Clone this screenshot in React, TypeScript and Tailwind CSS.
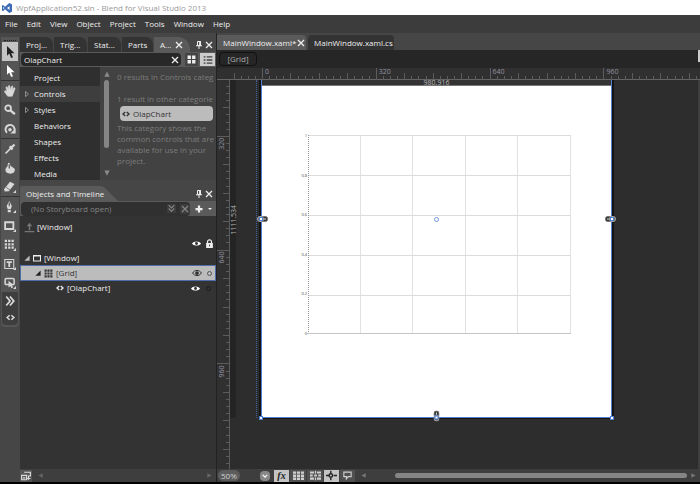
import React, { useState } from "react";
import clsx from "clsx";

const MENU = ["File", "Edit", "View", "Object", "Project", "Tools", "Window", "Help"];

const PANEL_TABS = [
  { label: "Proj...", width: "w-[34px]" },
  { label: "Trig...", width: "w-[34px]" },
  { label: "Stat...", width: "w-[34px]" },
  { label: "Parts", width: "w-[32px]" },
];

const CATEGORIES = [
  { label: "Project" },
  { label: "Controls", expandable: true, active: true },
  { label: "Styles", expandable: true },
  { label: "Behaviors" },
  { label: "Shapes" },
  { label: "Effects" },
  { label: "Media" },
];

const Svg = ({ size = 10, children }: { size?: number; children: React.ReactNode }) => (
  <svg
    width={size}
    height={size}
    viewBox="0 0 16 16"
    fill="none"
    stroke="currentColor"
    strokeWidth="1.6"
    className="shrink-0"
    aria-hidden
  >
    {children}
  </svg>
);

const CloseIcon = () => (
  <Svg size={8}>
    <path d="M2 2 14 14M14 2 2 14" strokeWidth="2.6" />
  </Svg>
);

const PinIcon = () => (
  <Svg size={8}>
    <path d="M5 1h6v8H5zM2 9.500h12M8 10v6" strokeWidth="2" />
    <path d="M9 1h2v8H9z" fill="currentColor" />
  </Svg>
);

const EyeIcon = () => (
  <Svg size={9}>
    <path d="M0 8C3 3 13 3 16 8 13 13 3 13 0 8z" fill="#fff" stroke="none" />
    <circle cx="8" cy="8" r="2.600" fill="#333" stroke="none" />
  </Svg>
);

const EyeOutlineIcon = () => (
  <Svg size={10}>
    <path d="M1 8C4 2.500 12 2.500 15 8 12 13.500 4 13.500 1 8z" strokeWidth="1.600" />
    <circle cx="8" cy="8" r="3" fill="currentColor" stroke="none" />
  </Svg>
);

const LockIcon = () => (
  <Svg size={9}>
    <path d="M2 7h12v9H2z" fill="currentColor" stroke="none" />
    <path d="M4.500 8V5a3.500 3.500 0 0 1 7 0v3" strokeWidth="2" />
    <path d="M8 10v3" stroke="#333" />
  </Svg>
);

const TagIcon = ({ size = 8 }: { size?: number }) => (
  <Svg size={size}>
    <path d="M6.500 4 2 8l4.500 4M9.500 4 14 8l-4.500 4" strokeWidth="2.800" />
  </Svg>
);

const GridIcon = () => (
  <Svg size={9}>
    <path
      d="M1 1h3.800v3.800H1zM6.100 1h3.800v3.800H6.100zM11.200 1H15v3.800h-3.800zM1 6.100h3.800v3.800H1zM6.100 6.100h3.800v3.800H6.100zM11.200 6.100H15v3.800h-3.800zM1 11.200h3.800V15H1zM6.100 11.200h3.800V15H6.100zM11.200 11.200H15V15h-3.800z"
      fill="currentColor"
      stroke="none"
    />
  </Svg>
);

const Corner = () => <path d="M16 12v4h-4z" fill="currentColor" stroke="none" />;

const TOOLS: { name: string; icon: React.ReactNode; divider?: boolean }[] = [
  {
    name: "Selection",
    icon: (
      <Svg size={12}>
        <path d="M4 0v13l3-3 2.500 6 2.500-1-2.500-5.500H14z" fill="currentColor" stroke="none" />
      </Svg>
    ),
  },
  {
    name: "Direct Selection",
    divider: true,
    icon: (
      <Svg size={12}>
        <path d="M4 0v13l3-3 2.500 6 2.500-1-2.500-5.500H14z" fill="#fff" stroke="none" />
      </Svg>
    ),
  },
  {
    name: "Pan",
    icon: (
      <Svg size={12}>
        <path
          d="M5 15 1 9.500C0 8 1.500 7 2.800 8L4 9.200 2.600 3.500c0-1.300 1.400-1.500 1.900-.4L6 6.800 5.700 1.600C5.900.4 7.500.4 7.800 1.600l.7 5L10 1.900c.5-1.100 2-.8 1.900.5L11 7.200l2-3.200c.8-.9 2-.2 1.700.8L12.500 11 11 15z"
          fill="currentColor"
          stroke="currentColor"
          strokeWidth=".8"
        />
      </Svg>
    ),
  },
  {
    name: "Zoom",
    icon: (
      <Svg size={12}>
        <circle cx="5.500" cy="5.500" r="3.800" strokeWidth="2.400" />
        <path d="m8.500 8.500 6 5" strokeWidth="3.200" />
      </Svg>
    ),
  },
  {
    name: "Camera Orbit",
    divider: true,
    icon: (
      <Svg size={12}>
        <path d="M4 13A6 6 0 1 1 14 9" strokeWidth="2.600" />
        <circle cx="8" cy="9" r="2.400" fill="currentColor" stroke="none" />
        <path d="M15.500 7v7H8.500z" fill="currentColor" stroke="none" />
      </Svg>
    ),
  },
  {
    name: "Eyedropper",
    icon: (
      <Svg size={12}>
        <path d="M2 14 9.500 6.500" strokeWidth="2.200" />
        <path d="m7.500 4.500 4 4M10 6l4-4" strokeWidth="3" />
      </Svg>
    ),
  },
  {
    name: "Paint Bucket",
    icon: (
      <Svg size={12}>
        <path
          d="M5.500 1c2.500 0 3 2 3 4L13 8c2 1 2 4 0 6-2 2-7 2-9.500 0C1 12 1.500 8 4.500 6z"
          fill="currentColor"
          stroke="none"
        />
        <path d="M7 3v5.500" stroke="#555" />
      </Svg>
    ),
  },
  {
    name: "Eraser",
    divider: true,
    icon: (
      <Svg size={12}>
        <path d="M0 11 8 1l6 3-7.500 9.500L1 14z" fill="currentColor" stroke="none" />
        <path d="m3 8.500 5 3.500" stroke="#555" strokeWidth="1" />
        <Corner />
      </Svg>
    ),
  },
  {
    name: "Pen",
    icon: (
      <Svg size={12}>
        <path d="M7 0 3.500 6.500 5 11h4l1.500-4.500zM5 12h4v3H5z" fill="currentColor" stroke="none" />
        <path d="M7 2v5" stroke="#555" />
        <Corner />
      </Svg>
    ),
  },
  {
    name: "Rectangle",
    icon: (
      <Svg size={12}>
        <path d="M1.500 3h11v9h-11z" strokeWidth="2.400" />
        <Corner />
      </Svg>
    ),
  },
  {
    name: "Grid",
    icon: (
      <Svg size={12}>
        <path
          d="M1 1h3v3H1zM5.500 1h3v3h-3zM10 1h3v3h-3zM1 5.500h3v3H1zM5.500 5.500h3v3h-3zM10 5.500h3v3h-3zM1 10h3v3H1zM5.500 10h3v3h-3zM10 10h3v3h-3z"
          fill="currentColor"
          stroke="none"
        />
        <Corner />
      </Svg>
    ),
  },
  {
    name: "TextBlock",
    icon: (
      <Svg size={12}>
        <path d="M1 2h12v12H1z" strokeWidth="1.400" />
        <path d="M3.500 5.500h7M7 5.500v6.500" strokeWidth="2.400" />
        <Corner />
      </Svg>
    ),
  },
  {
    name: "Button",
    icon: (
      <Svg size={12}>
        <rect x="1.500" y="2" width="12" height="8" rx="1.500" strokeWidth="2" />
        <path d="M6 5v9l2.300-2 1.700 3 2-1-1.500-3H13z" fill="currentColor" stroke="none" />
        <Corner />
      </Svg>
    ),
  },
];

const ToolBar = () => {
  const [tool, setTool] = useState("Selection");

  return (
    <nav className="flex w-5 shrink-0 flex-col bg-[#464646] pl-px pt-1">
      <div className="flex w-[18px] flex-col items-center rounded-b-sm bg-[#555] text-[#d8d8d8]">
        <span className="my-px h-[3px] w-3 border-b border-dotted border-[#222]" />
        {TOOLS.map((t) => (
          <React.Fragment key={t.name}>
            <button
              aria-label={t.name}
              onClick={() => setTool(t.name)}
              className={clsx(
                "flex h-[19px] w-4 items-center justify-center",
                tool === t.name && "bg-[#c4c4c4] text-[#222]",
              )}
            >
              {t.icon}
            </button>
            {t.divider && <span className="h-px w-full bg-[#333]" />}
          </React.Fragment>
        ))}
        <div className="mb-[2px] flex w-4 flex-col items-center rounded-b-sm bg-[#3e3e3e]">
          <button aria-label="Assets" className="flex h-[17px] w-4 items-center justify-center">
            <Svg size={12}>
              <path d="m3 2 5 6-5 6M8 2l5 6-5 6" strokeWidth="2.400" />
            </Svg>
          </button>
          <button
            aria-label="Last used asset"
            className="flex h-4 w-4 items-center justify-center"
          >
            <TagIcon size={9} />
          </button>
        </div>
      </div>
    </nav>
  );
};

const AssetsPanel = () => {
  const [query, setQuery] = useState("OlapChart");

  return (
    <section className="flex h-[145px] shrink-0 flex-col">
      <div className="flex h-[17px] items-end pt-[2px] leading-none">
        {PANEL_TABS.map((tab) => (
          <button
            key={tab.label}
            className={clsx(
              "h-[15px] shrink-0 rounded-tr-lg border-r border-[#464646] bg-[#333] pl-[6px] text-left",
              tab.width,
            )}
          >
            {tab.label}
          </button>
        ))}
        <div className="flex h-[15px] w-[36px] items-center gap-1 rounded-tr-xl bg-[#5a5a5a] pl-[6px]">
          <button>A...</button>
          <button aria-label="Close Assets">
            <CloseIcon />
          </button>
        </div>
        <div className="ml-auto flex h-[15px] items-center gap-[2px] pr-[3px]">
          <button aria-label="Pin">
            <PinIcon />
          </button>
          <button aria-label="Close panel">
            <CloseIcon />
          </button>
        </div>
      </div>
      <div className="flex h-[15px] shrink-0 items-center gap-1 bg-[#5a5a5a] pl-px pr-px">
        <label className="flex h-[13px] min-w-0 flex-1 items-center rounded-sm bg-[#282828] pl-[3px] pr-[2px]">
          <input
            aria-label="Search assets"
            value={query}
            onChange={(e) => setQuery(e.target.value)}
            className="h-[13px] min-w-0 flex-1 bg-transparent outline-none"
          />
          <button aria-label="Clear search" onClick={() => setQuery("")}>
            <CloseIcon />
          </button>
        </label>
        <button
          aria-label="Grid mode"
          className="flex h-[13px] w-[13px] items-center justify-center bg-[#444]"
        >
          <Svg size={9}>
            <path
              d="M1 1h6v6H1zM9 1h6v6H9zM1 9h6v6H1zM9 9h6v6H9z"
              fill="currentColor"
              stroke="none"
            />
          </Svg>
        </button>
        <button
          aria-label="List mode"
          className="-ml-[2px] flex h-[13px] w-[15px] items-center justify-center bg-[#cdcdcd] text-[#444]"
        >
          <Svg size={10}>
            <path d="M1 3h3M6 3h9M1 8h3M6 8h9M1 13h3M6 13h9" strokeWidth="2.200" />
          </Svg>
        </button>
      </div>
      <div className="flex min-h-0 flex-1">
        <ul className="w-20 shrink-0 bg-[#2f2f2f] pt-[3px]">
          {CATEGORIES.map((c) => (
            <li
              key={c.label}
              className={clsx("flex h-4 items-center pl-1", c.active && "bg-[#3e3e3e]")}
            >
              <span className="w-[10px] text-[#aaa]">
                {c.expandable && (
                  <Svg size={6}>
                    <path d="M4 1v14l8-7z" strokeWidth="2" />
                  </Svg>
                )}
              </span>
              {c.label}
            </li>
          ))}
        </ul>
        <div className="flex w-[13px] shrink-0 flex-col items-center bg-[#424242] py-1 text-[#8a8a8a]">
          <Svg size={6}>
            <path d="M8 1 15 15H1z" fill="currentColor" stroke="none" />
          </Svg>
          <span className="mt-[3px] h-[68px] w-[5px] rounded-full bg-[#858585]" />
          <span className="mt-auto">
            <Svg size={6}>
              <path d="M8 15 15 1H1z" fill="currentColor" stroke="none" />
            </Svg>
          </span>
        </div>
        <div className="min-w-0 flex-1 whitespace-nowrap bg-[#424242] pl-1 pt-1 leading-[11px] text-[#7c7c7c]">
          <p>0 results in Controls categ</p>
          <p className="mt-[11px]">1 result in other categorie</p>
          <button className="ml-[3px] mt-[2px] flex h-[15px] w-[93px] items-center gap-[3px] rounded-sm bg-[#bcbcbc] pl-[2px] text-[#333]">
            <TagIcon />
            OlapChart
          </button>
          <p className="mt-px">
            This category shows the
            <br />
            common controls that are
            <br />
            available for use in your
            <br />
            project.
          </p>
        </div>
      </div>
    </section>
  );
};

const ObjectsPanel = () => (
  <section className="flex min-h-0 flex-1 flex-col bg-[#464646] pt-[6px]">
    <div className="flex h-[15px] shrink-0 items-center">
      <h2 className="relative flex h-full w-[98px] items-center pl-[6px]">
        <svg
          className="absolute inset-0 h-full w-full"
          viewBox="0 0 98 15"
          preserveAspectRatio="none"
          aria-hidden
        >
          <path d="M0 15V2Q0 0 2 0H80Q84 0 87 4L98 15z" fill="#5a5a5a" />
        </svg>
        <span className="relative whitespace-nowrap">Objects and Timeline</span>
      </h2>
      <div className="ml-auto flex items-center gap-[2px] pr-[3px]">
        <button aria-label="Pin">
          <PinIcon />
        </button>
        <button aria-label="Close panel">
          <CloseIcon />
        </button>
      </div>
    </div>
    <div className="flex h-[15px] shrink-0 items-center bg-[#5a5a5a]">
      <div className="ml-px flex h-[14px] min-w-0 flex-1 items-center gap-1 rounded-sm bg-[#303030] pl-[10px] text-[#858585]">
        <span className="flex-1">(No Storyboard open)</span>
        <button aria-label="Open storyboard" className="bg-[#3c3c3c]">
          <Svg size={9}>
            <path d="m3 2 5 5 5-5M3 8l5 5 5-5" strokeWidth="2" />
          </Svg>
        </button>
        <button aria-label="Close storyboard" className="bg-[#3c3c3c] p-px">
          <CloseIcon />
        </button>
      </div>
      <button
        aria-label="New storyboard"
        className="flex w-[26px] items-center justify-center gap-[5px]"
      >
        <Svg size={8}>
          <path d="M8 1v14M1 8h14" strokeWidth="4.500" />
        </Svg>
        <Svg size={4}>
          <path d="M0 4h16l-8 8z" fill="currentColor" stroke="none" />
        </Svg>
      </button>
    </div>
    <div className="flex min-h-0 flex-1 flex-col bg-[#333] pt-[3px]">
      <div className="flex h-4 items-center gap-[2px] pl-1">
        <span className="text-[#777]">
          <Svg size={11}>
            <path d="M8 12V4M1 14h14" strokeWidth="2" />
            <path d="M8 1 4 6h8z" fill="currentColor" stroke="none" />
          </Svg>
        </span>
        [Window]
      </div>
      <div className="flex h-4 items-center justify-end gap-1 pr-[2px]">
        <EyeIcon />
        <LockIcon />
      </div>
      <ul>
        <li className="flex h-[14px] items-center pl-1">
          <Svg size={6}>
            <path d="M15 1v14H1z" fill="#bbb" stroke="none" />
          </Svg>
          <span className="ml-[3px] mr-[3px]">
            <Svg size={8}>
              <path d="M1 3h14v11H1zM1 4h14" strokeWidth="2.200" />
            </Svg>
          </span>
          [Window]
        </li>
        <li className="flex h-4 items-center border border-[#4f6da8] bg-[#bcbcbc] pl-[14px] pr-[2px] text-[#333]">
          <Svg size={6}>
            <path d="M15 1v14H1z" fill="#222" stroke="none" />
          </Svg>
          <span className="ml-[3px] mr-[3px]">
            <GridIcon />
          </span>
          <span className="flex-1">[Grid]</span>
          <EyeOutlineIcon />
          <span className="ml-[5px] mr-px h-[5px] w-[5px] rounded-full border border-[#555]" />
        </li>
        <li className="flex h-[14px] items-center pl-9 pr-1">
          <TagIcon />
          <span className="ml-[3px] flex-1">[OlapChart]</span>
          <EyeIcon />
          <span className="ml-[6px] mr-px h-[5px] w-[5px] rounded-full border border-[#1c1c1c]" />
        </li>
      </ul>
    </div>
    <div className="flex h-[13px] shrink-0 items-center justify-between bg-[#3e3e3e] pr-1 text-[#666]">
      <div className="flex items-center gap-[6px]">
        <button aria-label="Zoom timeline" className="bg-[#555] p-px text-[#ddd]">
          <Svg size={10}>
            <path d="M5 2h10v6h-4M1 7h8v7H1zM3 11h4M12 8v6M9 12h6" strokeWidth="1.800" />
          </Svg>
        </button>
        <Svg size={5}>
          <path d="M15 1v14L1 8z" fill="currentColor" stroke="none" />
        </Svg>
      </div>
      <Svg size={5}>
        <path d="M1 1v14l14-7z" fill="currentColor" stroke="none" />
      </Svg>
    </div>
  </section>
);

// 320 document units take this many pixels at 50% zoom
const STEP = 113.8;
const ticks = Array.from({ length: 70 }, (_, i) => i - 4);

const tickLength = (i: number) => (i % 16 === 0 ? 12 : i % 4 === 0 ? 6 : 3);

const TopRuler = () => (
  <svg className="h-3 w-full shrink-0 bg-[#303030]" aria-hidden>
    <path d="M0 11.500H2000" stroke="#666" />
    {ticks.map((i) => {
      const x = Math.round(45 + (i * STEP) / 16) + 0.5;
      return x > 14 ? <path key={i} d={`M${x} 12V${11 - tickLength(i)}`} stroke="#5c5c5c" /> : null;
    })}
    {[0, 1, 2, 3].map((n) => (
      <text key={n} x={48 + n * STEP} y="6" fontSize="7" fill="#9090a0">
        {n * 320}
      </text>
    ))}
  </svg>
);

const LeftRuler = () => (
  <svg className="h-full w-[13px] shrink-0 bg-[#303030]" aria-hidden>
    <path d="M12.500 0V2000" stroke="#5c5c5c" />
    {ticks.map((i) => {
      const y = Math.round(-58 + (i * STEP) / 16) + 0.5;
      return y > 2 ? <path key={i} d={`M12 ${y}H${12 - tickLength(i)}`} stroke="#5c5c5c" /> : null;
    })}
    {[1, 2, 3].map((n) => (
      <text
        key={n}
        transform={`translate(7 ${-44 + n * STEP}) rotate(-90)`}
        fontSize="7"
        fill="#9090a0"
      >
        {n * 320}
      </text>
    ))}
  </svg>
);

const OlapChart = () => (
  <svg width="276" height="208" viewBox="0 0 276 208" aria-label="OlapChart">
    {[62.5, 114.5, 167.5, 219.5, 272.5].map((x) => (
      <path key={x} d={`M${x} 4V202`} stroke="#e2e2e2" />
    ))}
    {[4.5, 44.5, 84.5, 124.5, 164.5].map((y) => (
      <path key={y} d={`M10 ${y}H273`} stroke="#dcdcdc" />
    ))}
    <path d="M10.500 4V202" stroke="#999" strokeDasharray="1 1" />
    <path d="M9 202.500H273" stroke="#c4c4c4" />
    {["1", "0.8", "0.6", "0.4", "0.2", "0"].map((label, i) => (
      <text key={label} x="9" y={6 + i * 39.6} fontSize="4" fill="#444" textAnchor="end">
        {label}
      </text>
    ))}
  </svg>
);

const Handle = ({ className }: { className: string }) => (
  <span className={clsx("absolute h-1 w-1 border border-[#4f7fd0] bg-white", className)} />
);

const LinkHandle = ({ className }: { className: string }) => (
  <svg width="11" height="6" viewBox="0 0 11 6" className={clsx("absolute", className)} aria-hidden>
    <rect x="4" y=".5" width="6.500" height="5" rx="2" fill="#333" stroke="#777" />
    <rect x=".5" y=".5" width="6" height="5" rx="2.500" fill="#666" stroke="#aaa" />
    <rect x="2.500" y="1.500" width="3" height="3" fill="#fff" stroke="#4f7fd0" />
    <path d="M7 3h2" stroke="#ddd" />
  </svg>
);

const Artboard = () => (
  <div className="relative flex min-h-0 flex-1 items-start bg-[#2d2d2d]">
    <div className="h-[338px] w-[6px] bg-[#242424]" />
    <div className="ml-5 h-[338px] w-[3px] border-l border-dotted border-[#3f5f9f]" />
    <div className="relative h-[339px] w-[355px] border-b border-l-2 border-r-2 border-[#141414]">
      <div className="flex h-full flex-col border-x border-b border-[#4f7fd0] bg-white">
        <div className="flex h-[6px] items-center justify-center border-b border-[#777] bg-[#333] text-[7px] leading-none text-[#bbb]">
          980.916
        </div>
        <div className="pl-9 pt-[45px]">
          <OlapChart />
        </div>
      </div>
      <span className="absolute left-[173px] top-[137px] h-[5px] w-[5px] rounded-full border border-[#6f9be0] bg-white" />
      <LinkHandle className="-left-1 top-[136px]" />
      <LinkHandle className="-right-1 top-[136px] rotate-180" />
      <LinkHandle className="-bottom-px left-[170px] -rotate-90" />
      <Handle className="-bottom-[2px] -left-[2px]" />
      <Handle className="-bottom-[2px] -right-[2px]" />
    </div>
    <span className="absolute left-0 top-[125px] rotate-180 text-[7px] leading-[7px] text-[#b0b0b0] [writing-mode:vertical-rl]">
      1111.534
    </span>
  </div>
);

const StatusBar = () => (
  <div className="flex h-[13px] shrink-0 items-center bg-[#3e3e3e] pl-px text-[#cfcfcf]">
    <input
      aria-label="Zoom"
      defaultValue="50%"
      className="h-[11px] w-[22px] rounded-full bg-[#5c5c5c] pl-[3px] outline-none"
    />
    <button
      aria-label="Zoom levels"
      className="ml-5 flex h-[10px] w-[10px] items-center justify-center rounded-sm bg-[#888] text-white"
    >
      <Svg size={6}>
        <path d="m2 5 6 6 6-6" strokeWidth="3" />
      </Svg>
    </button>
    <div className="ml-1 flex items-center gap-px">
      <button
        aria-label="Effects rendering"
        className="flex h-3 w-[15px] items-center justify-center bg-[#c4c4c4] font-['Liberation_Serif',serif] text-[10px] font-bold italic leading-none text-[#222]"
      >
        fx
      </button>
      <button
        aria-label="Show snap grid"
        className="flex h-3 w-4 items-center justify-center bg-[#505050]"
      >
        <Svg size={11}>
          <path
            d="M0 2h4.500v3.500H0zM5.700 2h4.500v3.500H5.700zM11.500 2H16v3.500h-4.500zM0 6.500h4.500V10H0zM5.700 6.500h4.500V10H5.700zM11.500 6.500H16V10h-4.500zM0 11h4.500v3.500H0zM5.700 11h4.500v3.500H5.700zM11.500 11H16v3.500h-4.500z"
            fill="currentColor"
            stroke="none"
          />
        </Svg>
      </button>
      <button
        aria-label="Snap to gridlines"
        className="flex h-3 w-4 items-center justify-center bg-[#505050]"
      >
        <Svg size={11}>
          <path
            d="M0 3.500h6M10 3.500h6M0 8h4M6 8h4M12 8h4M0 12.500h6M10 12.500h6"
            strokeWidth="3"
          />
          <path d="M8 1v4M8 11v4" />
        </Svg>
      </button>
      <button
        aria-label="Snap to snaplines"
        className="flex h-3 w-[15px] items-center justify-center bg-[#c4c4c4] text-[#222]"
      >
        <Svg size={11}>
          <path d="M0 8h5M11 8h5M7 1v4M7 11v4" strokeWidth="2" />
          <circle cx="7" cy="8" r="2.500" strokeWidth="2" />
        </Svg>
      </button>
      <button
        aria-label="Annotations"
        className="flex h-3 w-[15px] items-center justify-center bg-[#505050]"
      >
        <Svg size={9}>
          <path d="M1.500 2h13v8H9l-3 4v-4H1.500z" strokeWidth="2" />
        </Svg>
      </button>
    </div>
    <span className="ml-[6px] text-[#777]">
      <Svg size={5}>
        <path d="M15 1v14L1 8z" fill="currentColor" stroke="none" />
      </Svg>
    </span>
    <span className="ml-[29px] h-[5px] flex-1 rounded-full bg-[#858585]" />
    <span className="mx-1 text-[#777]">
      <Svg size={5}>
        <path d="M1 1v14l14-7z" fill="currentColor" stroke="none" />
      </Svg>
    </span>
  </div>
);

const Editor = () => (
  <main className="flex min-w-0 flex-1 flex-col border-l border-[#222] bg-[#464646] pt-[2px]">
    <div className="flex h-[15px] shrink-0 gap-[2px] leading-none">
      <div className="flex w-[89px] items-center gap-px rounded-tr-sm bg-[#5a5a5a] pl-[6px]">
        <button>MainWindow.xaml*</button>
        <button aria-label="Close MainWindow.xaml">
          <CloseIcon />
        </button>
      </div>
      <button className="w-[86px] rounded-t-sm bg-[#333] pl-[6px] text-left">
        MainWindow.xaml.cs
      </button>
    </div>
    <div className="flex h-[18px] shrink-0 items-center justify-between bg-[#262626] pl-[2px]">
      <button className="h-[14px] w-[38px] rounded-sm border border-[#111] leading-none text-[#aaa]">
        [Grid]
      </button>
      <span className="h-3 w-[2px] self-start bg-[#ccc]" />
    </div>
    <TopRuler />
    <div className="flex min-h-0 flex-1 border-r-2 border-[#3e3e3e]">
      <LeftRuler />
      <Artboard />
    </div>
    <StatusBar />
  </main>
);

const App = () => (
  <div className="flex h-screen flex-col border-b-2 border-black bg-[#464646] font-['Open_Sans',sans-serif] text-[8px] leading-[10px] text-[#eee]">
    <header className="flex h-[15px] shrink-0 items-center gap-1 bg-white pl-[2px] text-[#999]">
      <Svg size={10}>
        <path
          d="M11.500 0 16 2v12l-4.500 2L5 10l-3.500 3L0 12V4l1.500-1L5 6zM12 5 8 8l4 3zM2 6v4l2-2z"
          fill="#3d6bb5"
          fillRule="evenodd"
          stroke="none"
        />
      </Svg>
      <h1>WpfApplication52.sln - Blend for Visual Studio 2013</h1>
    </header>
    <nav className="flex h-[18px] shrink-0 items-center gap-[9px] bg-[#3c3c3c] pl-[5px]">
      {MENU.map((item) => (
        <button key={item}>{item}</button>
      ))}
    </nav>
    <div className="flex min-h-0 flex-1">
      <ToolBar />
      <aside className="flex w-[196px] shrink-0 flex-col pt-[2px]">
        <AssetsPanel />
        <ObjectsPanel />
      </aside>
      <Editor />
    </div>
  </div>
);

export default App;
